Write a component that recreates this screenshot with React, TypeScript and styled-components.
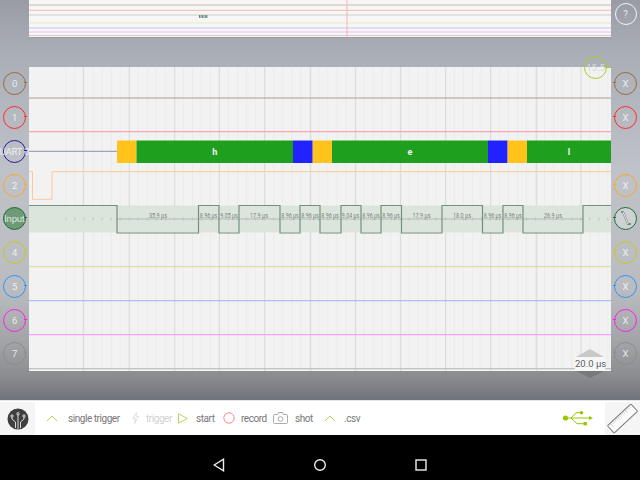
import styled, { createGlobalStyle } from 'styled-components';

const GlobalStyle = createGlobalStyle`
  html, body {
    margin: 0;
    padding: 0;
    background: #000;
    font-family: Roboto, "Liberation Sans", sans-serif;
  }
`;

const Screen = styled.div`
  width: 640px;
  height: 480px;
  display: flex;
  flex-direction: column;
  overflow: hidden;
`;

const Stage = styled.div`
  height: 400px;
  display: flex;
  background: linear-gradient(
    #999ca4 0,
    #a9adb5 50px,
    #bfc2c8 170px,
    #babcc0 290px,
    #a0a2a6 345px,
    #8b8d91 375px,
    #70737a 400px
  );
`;

const Rail = styled.div`
  width: 29px;
  flex: none;
  display: flex;
  flex-direction: column;
  align-items: center;
  padding-top: 67.1px;
  box-sizing: border-box;
`;

const RightRail = styled(Rail)`
  padding-top: 3px;
`;

const HelpButton = styled.div`
  width: 22px;
  height: 22px;
  box-sizing: border-box;
  border: 1.5px solid #f4f4f4;
  border-radius: 50%;
  margin-bottom: 42.1px;
  display: flex;
  align-items: center;
  justify-content: center;
  font-size: 10px;
  color: #e0e2e5;
`;

const RailRow = styled.div`
  height: 33.75px;
  flex: none;
  display: flex;
  align-items: center;
  justify-content: center;
`;

const ChannelButton = styled.div<{ $color: string; $side: 'left' | 'right'; $fill?: string }>`
  position: relative;
  width: 23px;
  height: 23px;
  box-sizing: border-box;
  border: 1.5px solid ${(p) => p.$color};
  border-radius: 50%;
  background: ${(p) => p.$fill ?? 'transparent'};
  display: flex;
  align-items: center;
  justify-content: center;
  font-size: 9.5px;
  letter-spacing: -0.2px;
  white-space: nowrap;
  color: rgba(255, 255, 255, 0.78);

  &::after {
    content: '';
    position: absolute;
    top: 9px;
    ${(p) => (p.$side === 'left' ? 'left: 20px' : 'right: 20px')};
    width: 3px;
    height: 1px;
    background: ${(p) => p.$color};
  }
`;

const Center = styled.div`
  width: 582px;
  flex: none;
  display: flex;
  flex-direction: column;
`;

const Overview = styled.svg`
  display: block;
  width: 582px;
  height: 38px;
  background: #f6f6f6;
  border-bottom: 1px solid #9a9ca0;
  box-sizing: border-box;
`;

const Plot = styled.div`
  position: relative;
  margin-top: 29px;
  width: 582px;
  height: 305px;
  background: #f2f2f2;
  border-bottom: 1px solid #8f9195;
  box-sizing: border-box;
`;

const PlotSvg = styled.svg`
  display: block;
  width: 582px;
  height: 304px;
`;

const Marker = styled.div`
  position: absolute;
  left: 555px;
  top: -11px;
  width: 23px;
  height: 23px;
  box-sizing: border-box;
  border: 1.5px solid #a8cc28;
  border-radius: 50%;
  display: flex;
  align-items: center;
  justify-content: center;
  font-size: 9.5px;
  color: #d5d8da;

  &::after {
    content: '';
    position: absolute;
    left: 20px;
    top: 9.5px;
    width: 6px;
    height: 1px;
    background: #a8cc28;
  }
`;

const TimeScale = styled.div`
  position: absolute;
  left: 546px;
  top: 282px;
  width: 30px;
  display: flex;
  flex-direction: column;
  align-items: center;
`;

const ArrowUp = styled.div`
  width: 0;
  height: 0;
  border-left: 14px solid transparent;
  border-right: 14px solid transparent;
  border-bottom: 8px solid #c9c9c9;
`;

const ArrowDown = styled.div`
  width: 0;
  height: 0;
  border-left: 14px solid transparent;
  border-right: 14px solid transparent;
  border-top: 7px solid #77797d;
`;

const TimeLabel = styled.div`
  width: 30px;
  height: 14px;
  background: #f7f7f7;
  color: #5f5f5f;
  font-size: 9.5px;
  line-height: 14px;
  text-align: center;
  white-space: nowrap;
`;

const Toolbar = styled.div`
  height: 35px;
  background: #fff;
  border-top: 1px solid #e6e6e6;
  box-sizing: border-box;
  display: flex;
  align-items: stretch;
`;

const IconCell = styled.div`
  width: 35px;
  flex: none;
  background: #f5f5f5;
  margin-top: 1px;
  display: flex;
  align-items: center;
  justify-content: center;
`;

const ToolList = styled.div`
  display: flex;
  align-items: center;
  margin-left: 11px;
`;

const Tool = styled.div<{ $width: number; $gap: number; $disabled?: boolean }>`
  width: ${(p) => p.$width}px;
  flex: none;
  display: flex;
  align-items: center;
  gap: ${(p) => p.$gap}px;
  font-size: 10px;
  letter-spacing: -0.45px;
  color: ${(p) => (p.$disabled ? '#d2d2d2' : '#777')};
  white-space: nowrap;
`;

const Spacer = styled.div`
  flex: 1;
`;

const UsbSlot = styled.div`
  display: flex;
  align-items: center;
  margin-right: 12px;
`;

const NavBar = styled.div`
  height: 45px;
  background: #000;
  display: flex;
  justify-content: center;
  padding-top: 23px;
  box-sizing: border-box;
`;

const NavButton = styled.div`
  width: 101px;
  display: flex;
  justify-content: center;
  height: 14px;
`;

const left = [
  { label: '0', color: '#9c6a3e' },
  { label: '1', color: '#ff2a2a' },
  { label: 'UART 0', color: '#1c1c9c' },
  { label: '2', color: '#ffa726' },
  { label: 'Input', color: '#1e6e32', fill: '#6f9a78' },
  { label: '4', color: '#c8c81e' },
  { label: '5', color: '#2a96ff' },
  { label: '6', color: '#ff1ee6' },
  { label: '7', color: '#8a8c90' },
];

const flatLines = [
  { y: 98, color: '#b39c94' },
  { y: 131.7, color: '#f09aa0' },
  { y: 266.7, color: '#d9d98e' },
  { y: 300.7, color: '#94b6f8' },
  { y: 334.7, color: '#ff8cff' },
  { y: 368.7, color: '#b5b5b5' },
];

const uart = [
  { from: 117, to: 136.5, color: '#ffc31c' },
  { from: 136.5, to: 293, color: '#1ea01e', text: 'h' },
  { from: 293, to: 312.7, color: '#2222ff' },
  { from: 312.7, to: 332, color: '#ffc31c' },
  { from: 332, to: 488, color: '#1ea01e', text: 'e' },
  { from: 488, to: 507.6, color: '#2222ff' },
  { from: 507.6, to: 527, color: '#ffc31c' },
  { from: 527, to: 611, color: '#1ea01e', text: 'l' },
];

const edges = [117, 198.5, 219, 239, 280, 300, 320, 341, 361, 381, 401.5, 442, 482.5, 503, 523, 583];

const inputPath = edges.reduce(
  (d, x, i) => `${d} L${x} ${i % 2 === 0 ? 205.5 : 233} L${x} ${i % 2 === 0 ? 233 : 205.5}`,
  'M29 205.5',
) + ' L611 205.5';

const pulses = [
  { x: 158, t: '35.9 µs', w: 18 },
  { x: 208.5, t: '8.96 µs', w: 17.5 },
  { x: 229, t: '9.05 µs', w: 17.5 },
  { x: 259, t: '17.9 µs', w: 18 },
  { x: 290, t: '8.96 µs', w: 17.5 },
  { x: 310, t: '8.96 µs', w: 17.5 },
  { x: 330, t: '8.96 µs', w: 17.5 },
  { x: 350.5, t: '9.04 µs', w: 17.5 },
  { x: 371, t: '8.96 µs', w: 17.5 },
  { x: 391, t: '8.96 µs', w: 17.5 },
  { x: 421.5, t: '17.9 µs', w: 18 },
  { x: 462, t: '18.0 µs', w: 18 },
  { x: 492.5, t: '8.96 µs', w: 17.5 },
  { x: 513, t: '8.96 µs', w: 17.5 },
  { x: 553, t: '26.9 µs', w: 18 },
];

const minorGrid = Array.from({ length: 61 }, (_, i) => 66 + i * 9.03);
const majorGrid = [83.3, 129.3, 174.7, 219.3, 264.7, 310.7, 355.7, 400.7, 445.7, 490.7, 536.7, 581];

const overviewLines = [
  { y: 5, color: '#c9bcb6' },
  { y: 10.3, color: '#ffb9a8' },
  { y: 15, color: '#c9d0ca' },
  { y: 23, color: '#e9e9c9' },
  { y: 28, color: '#c3c9e9' },
  { y: 32, color: '#f2baf2' },
  { y: 35.5, color: '#cfcfcf' },
];

function Chevron() {
  return (
    <svg width="12" height="7" viewBox="0 0 12 7">
      <path d="M1 6 L6 1 L11 6" fill="none" stroke="#b4d85a" strokeWidth="1" />
    </svg>
  );
}

function Logo() {
  return (
    <svg width="22" height="22" viewBox="0 0 22 22">
      <circle cx="11" cy="11" r="10.5" fill="#3f3f3f" />
      <g fill="none" stroke="#fff" strokeWidth="0.8">
        <path d="M11 21 V7" />
        <path d="M8.5 20 V14 L5 11 V9" />
        <path d="M13.5 20 V14 L17 11 V9" />
        <circle cx="11" cy="5.8" r="1.2" />
        <circle cx="5" cy="8" r="1.2" />
        <circle cx="17" cy="8" r="1.2" />
      </g>
    </svg>
  );
}

function UsbIcon() {
  return (
    <svg width="31" height="18" viewBox="0 0 31 18">
      <g fill="#96c800" stroke="#96c800">
        <circle cx="3.5" cy="9" r="2.6" strokeWidth="0" />
        <path d="M3.5 9 H28" strokeWidth="1" />
        <path d="M31 9 L27 7 V11 Z" strokeWidth="0" />
        <path d="M9 9 L14 3.7 H19" fill="none" strokeWidth="1" />
        <circle cx="19.5" cy="3.7" r="1.8" strokeWidth="0" />
        <path d="M9 9 L15 14.7 H22" fill="none" strokeWidth="1" />
        <rect x="21.5" y="13" width="3.4" height="3.4" strokeWidth="0" />
      </g>
    </svg>
  );
}

function RulerIcon() {
  return (
    <svg width="33" height="33" viewBox="0 0 33 33">
      <g transform="rotate(-43 16.5 16.5)">
        <rect x="0.5" y="11.5" width="32" height="10" rx="1" fill="#fbfbfb" stroke="#7b7b7b" strokeWidth="1" />
        {Array.from({ length: 14 }, (_, i) => (
          <path key={i} d={`M${4 + i * 2} 11.5 v${i % 5 === 0 ? 4 : 2.5}`} stroke="#999" strokeWidth="0.5" />
        ))}
      </g>
    </svg>
  );
}

export default function App() {
  return (
    <Screen>
      <GlobalStyle />
      <Stage>
        <Rail>
          {left.map((c) => (
            <RailRow key={c.label}>
              <ChannelButton $color={c.color} $side="left" $fill={c.fill}>
                {c.label}
              </ChannelButton>
            </RailRow>
          ))}
        </Rail>
        <Center>
          <Overview viewBox="29 0 582 37">
            {overviewLines.map((l) => (
              <line key={l.y} x1="29" x2="611" y1={l.y} y2={l.y} stroke={l.color} strokeWidth="1" />
            ))}
            <line x1="347" x2="347" y1="0" y2="37" stroke="#f8b4b4" strokeWidth="1" />
            <path d="M199.5 15 V18 M201 15 V18 M202.5 15 V18 M204 15 V18" stroke="#5f7a66" strokeWidth="0.9" />
            <rect x="205" y="15" width="2.5" height="3" fill="#8a9a8e" />
          </Overview>
          <Plot>
            <PlotSvg viewBox="29 67 582 304">
              {minorGrid.map((x) => (
                <line key={x} x1={x} x2={x} y1="67" y2="371" stroke="#ebebeb" strokeWidth="1" />
              ))}
              {majorGrid.map((x) => (
                <line key={x} x1={x} x2={x} y1="67" y2="371" stroke="#d9d9d9" strokeWidth="1" />
              ))}
              {flatLines.map((l) => (
                <line key={l.y} x1="29" x2="611" y1={l.y} y2={l.y} stroke={l.color} strokeWidth="1" />
              ))}
              <line x1="29" x2="117" y1="151.3" y2="151.3" stroke="#8d8db8" strokeWidth="1" />
              {uart.map((s) => (
                <g key={s.from}>
                  <rect x={s.from} y="140.5" width={s.to - s.from} height="22.5" fill={s.color} />
                  {s.text && (
                    <text
                      x={(s.from + s.to) / 2}
                      y="155"
                      textAnchor="middle"
                      fontFamily="Roboto, sans-serif"
                      fontSize="9"
                      fontWeight="700"
                      fill="#f4f4f4"
                    >
                      {s.text}
                    </text>
                  )}
                </g>
              ))}
              <path
                d="M29 171.7 H32.5 V199.3 H52 V171.7 H611"
                fill="none"
                stroke="#fcc89a"
                strokeWidth="1"
              />
              <rect x="29" y="205.5" width="582" height="27" fill="#dbe5dc" />
              <line x1="117" x2="583" y1="219" y2="219" stroke="#a9b3ab" strokeWidth="0.8" />
              {minorGrid.map((x) => (
                <line key={x} x1={x} x2={x} y1="217.5" y2="220.5" stroke="#b5bdb6" strokeWidth="0.8" />
              ))}
              <path d={inputPath} fill="none" stroke="#76917b" strokeWidth="1.2" />
              {pulses.map((p) => (
                <text
                  key={p.x}
                  x={p.x}
                  y="218"
                  textAnchor="middle"
                  fontFamily="Roboto, sans-serif"
                  fontSize="6.5"
                  fill="#7b827c"
                  textLength={p.w}
                  lengthAdjust="spacingAndGlyphs"
                >
                  {p.t}
                </text>
              ))}
            </PlotSvg>
            <Marker>15.5</Marker>
            <TimeScale>
              <ArrowUp />
              <TimeLabel>20.0 µs</TimeLabel>
              <ArrowDown />
            </TimeScale>
          </Plot>
        </Center>
        <RightRail>
          <HelpButton>?</HelpButton>
          {left.map((c, i) => (
            <RailRow key={c.label}>
              {i === 2 ? null : i === 4 ? (
                <ChannelButton $color={c.color} $side="right" $fill="#cfd2d4">
                  <svg width="15" height="15" viewBox="0 0 15 15">
                    <path d="M3 1 H5 L10 13 H13" fill="none" stroke="#7f8a82" strokeWidth="2" />
                    <path d="M5 1 L10 13" fill="none" stroke="#fff" strokeWidth="0.8" />
                  </svg>
                </ChannelButton>
              ) : (
                <ChannelButton $color={c.color} $side="right">
                  X
                </ChannelButton>
              )}
            </RailRow>
          ))}
        </RightRail>
      </Stage>
      <Toolbar>
        <IconCell>
          <Logo />
        </IconCell>
        <ToolList>
          <Tool $width={86} $gap={10}>
            <Chevron />
            single trigger
          </Tool>
          <Tool $width={46} $gap={7} $disabled>
            <svg width="7" height="12" viewBox="0 0 7 12">
              <path d="M4.5 0.5 L1 6.5 H3.5 L2.5 11.5 L6.5 4.5 H4 Z" fill="none" stroke="#d8d8d8" strokeWidth="0.8" />
            </svg>
            trigger
          </Tool>
          <Tool $width={45} $gap={8}>
            <svg width="10" height="11" viewBox="0 0 10 11">
              <path d="M0.5 0.8 L9.3 5.5 L0.5 10.2 Z" fill="none" stroke="#b4d85a" strokeWidth="1" />
            </svg>
            start
          </Tool>
          <Tool $width={50} $gap={6}>
            <svg width="12" height="12" viewBox="0 0 12 12">
              <circle cx="6" cy="6" r="5.2" fill="none" stroke="#ff8a8a" strokeWidth="1" />
            </svg>
            record
          </Tool>
          <Tool $width={51} $gap={7}>
            <svg width="15" height="12" viewBox="0 0 15 12">
              <path
                d="M1.5 2.5 H4.5 L5.5 0.5 H9.5 L10.5 2.5 H13.5 Q14.5 2.5 14.5 3.5 V10.5 Q14.5 11.5 13.5 11.5 H1.5 Q0.5 11.5 0.5 10.5 V3.5 Q0.5 2.5 1.5 2.5 Z"
                fill="none"
                stroke="#a2a2a2"
                strokeWidth="0.9"
              />
              <circle cx="7.5" cy="7" r="2.4" fill="none" stroke="#a2a2a2" strokeWidth="0.9" />
            </svg>
            shot
          </Tool>
          <Tool $width={40} $gap={8}>
            <Chevron />
            .csv
          </Tool>
        </ToolList>
        <Spacer />
        <UsbSlot>
          <UsbIcon />
        </UsbSlot>
        <IconCell>
          <RulerIcon />
        </IconCell>
      </Toolbar>
      <NavBar>
        <NavButton>
          <svg width="12" height="14" viewBox="0 0 12 14">
            <path d="M10.5 1.2 V12.8 L1.2 7 Z" fill="none" stroke="#eee" strokeWidth="1.4" />
          </svg>
        </NavButton>
        <NavButton>
          <svg width="14" height="14" viewBox="0 0 14 14">
            <circle cx="7" cy="7" r="5.3" fill="none" stroke="#eee" strokeWidth="1.4" />
          </svg>
        </NavButton>
        <NavButton>
          <svg width="12" height="14" viewBox="0 0 12 14">
            <rect x="1" y="2" width="10" height="10" fill="none" stroke="#eee" strokeWidth="1.4" />
          </svg>
        </NavButton>
      </NavBar>
    </Screen>
  );
}
